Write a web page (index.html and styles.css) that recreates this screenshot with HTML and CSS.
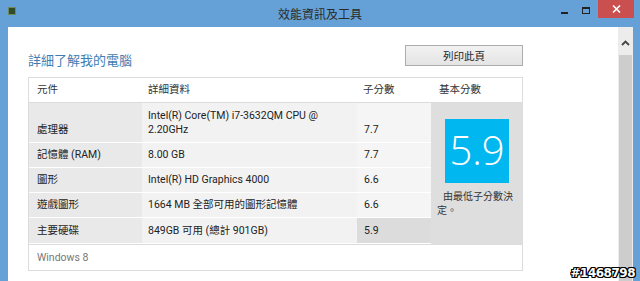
FILE: index.html
```html
<!DOCTYPE html>
<html lang="zh-Hant">
<head>
    <meta charset="UTF-8">
    <title>效能資訊及工具</title>
    <link rel="stylesheet" href="styles.css">
</head>
<body>

    <div class="window">
        <div class="titlebar">
            <span class="app-icon"></span>
            <span class="title">效能資訊及工具</span>
            <div class="controls">
                <span class="btn-min"><span></span></span>
                <span class="btn-max"><span></span></span>
                <span class="btn-close">
                    <svg width="9" height="8" viewBox="0 0 9 8"><path d="M1 0.5 L8 7.5 M8 0.5 L1 7.5" stroke="#fff" stroke-width="1.6"/></svg>
                </span>
            </div>
        </div>

        <div class="frame">
            <div class="content">
                <div class="page-head">
                    <h1>詳細了解我的電腦</h1>
                    <button>列印此頁</button>
                </div>

                <div class="score-table">
                    <div class="grid">
                        <div class="th">元件</div>
                        <div class="th">詳細資料</div>
                        <div class="th">子分數</div>
                        <div class="th">基本分數</div>

                        <div class="td name">處理器</div>
                        <div class="td info">Intel(R) Core(TM) i7-3632QM CPU @<br>2.20GHz</div>
                        <div class="td sub">7.7</div>

                        <div class="base">
                            <div class="base-box">5.9</div>
                            <p>由最低子分數決<br>定。</p>
                        </div>

                        <div class="td name">記憶體 (RAM)</div>
                        <div class="td info">8.00 GB</div>
                        <div class="td sub">7.7</div>

                        <div class="td name">圖形</div>
                        <div class="td info">Intel(R) HD Graphics 4000</div>
                        <div class="td sub">6.6</div>

                        <div class="td name">遊戲圖形</div>
                        <div class="td info">1664 MB 全部可用的圖形記憶體</div>
                        <div class="td sub">6.6</div>

                        <div class="td name">主要硬碟</div>
                        <div class="td info">849GB 可用 (總計 901GB)</div>
                        <div class="td sub lowest">5.9</div>
                    </div>
                    <div class="footer">Windows 8</div>
                </div>
            </div>

            <div class="scrollbar">
                <div class="scroll-up">
                    <svg width="9" height="6" viewBox="0 0 9 6"><polyline points="1,5 4.5,1.5 8,5" fill="none" stroke="#444" stroke-width="1.8"/></svg>
                </div>
                <div class="thumb"></div>
            </div>
        </div>
    </div>

    <div class="watermark">#1468798</div>

</body>
</html>
```

FILE: styles.css
```css
body {
    margin: 0;
    padding: 0;
    font-family: Roboto, "Noto Sans CJK TC", sans-serif;
    font-size: 10.5px;
    color: #333;
    overflow: hidden;
}
.window {
    width: 640px;
    height: 281px;
    background-color: #65a1d7;
    display: flex;
    flex-direction: column;
}
.titlebar {
    height: 27px;
    display: grid;
    grid-template-columns: 1fr auto 1fr;
    align-items: start;
}
.app-icon {
    width: 8px;
    height: 8px;
    margin: 7px 0 0 8px;
    background-color: #2f4a2c;
    border: 1px solid #6d8a5a;
    box-sizing: border-box;
}
.title {
    margin-top: 5px;
    font-size: 12px;
    color: #2a2a2a;
}
.controls {
    display: flex;
    justify-content: flex-end;
    align-items: flex-start;
    padding-right: 6px;
}
.btn-min,
.btn-max {
    width: 14px;
    height: 18px;
    display: flex;
    align-items: center;
    justify-content: center;
}
.btn-min {
    margin-right: 8px;
}
.btn-min span {
    width: 7px;
    height: 2px;
    margin-top: 8px;
    background-color: #222;
}
.btn-max {
    margin-right: 5px;
}
.btn-max span {
    width: 8px;
    height: 7px;
    border: 1px solid #222;
    border-top-width: 2px;
    box-sizing: border-box;
    margin-top: 3px;
}
.btn-close {
    width: 36px;
    height: 18px;
    background-color: #c9504e;
    display: flex;
    align-items: center;
    justify-content: center;
}
.frame {
    flex: 1;
    display: flex;
    padding-left: 8px;
    padding-right: 7px;
    overflow: hidden;
}
.content {
    flex: 1;
    background-color: #fff;
    padding: 18px 0 0 20px;
}
.page-head {
    width: 495px;
    display: flex;
    justify-content: space-between;
    align-items: flex-end;
}
h1 {
    margin: 0;
    font-family: "Noto Sans CJK TC", sans-serif;
    font-size: 13px;
    font-weight: normal;
    color: #3f7db3;
    line-height: 17px;
    position: relative;
    top: 2px;
}
button {
    width: 118px;
    height: 21px;
    font-family: inherit;
    font-size: 10.5px;
    color: #222;
    background: linear-gradient(#f2f2f2, #e4e4e4);
    border: 1px solid #adadad;
    padding: 0;
}
.score-table {
    width: 495px;
    margin-top: 11px;
    border: 1px solid #dcdcdc;
    box-sizing: border-box;
}
.grid {
    display: grid;
    grid-template-columns: 113px 215px 74px 91px;
    grid-template-rows: 25px 40px 25px 25px 25px 26px;
}
.th {
    background-color: #fff;
    border-bottom: 1px solid #dcdcdc;
    padding: 5px 0 0 8px;
    line-height: 14px;
}
.th:nth-child(2),
.th:nth-child(3) {
    padding-left: 6px;
}
.td {
    display: flex;
    align-items: flex-end;
    border-bottom: 1px solid #fff;
    padding: 0 0 5px 8px;
    line-height: 14px;
    color: #222;
}
.name {
    background-color: #e9e9e9;
}
.info {
    background-color: #f2f2f2;
    padding-left: 6px;
}
.sub {
    background-color: #f5f5f5;
    padding-left: 7px;
}
.sub.lowest {
    background-color: #dcdcdc;
}
.base {
    grid-column: 4;
    grid-row: 2 / span 5;
    background-color: #dedede;
    padding-top: 16px;
}
.base-box {
    width: 64px;
    height: 64px;
    margin-left: 14px;
    background-color: #00b7ef;
    color: #fff;
    font-family: "Open Sans", "Noto Sans", sans-serif;
    font-weight: 300;
    font-size: 40px;
    line-height: 62px;
    text-align: center;
}
.base p {
    margin: 7px 0 0 6px;
    text-indent: 6px;
    font-size: 10px;
    line-height: 14px;
    color: #333;
}
.footer {
    height: 25px;
    border-top: 1px solid #dcdcdc;
    background-color: #fff;
    padding-left: 8px;
    line-height: 25px;
    color: #777;
}
.scrollbar {
    width: 15px;
    background-color: #ececec;
    display: flex;
    flex-direction: column;
    align-items: center;
}
.scroll-up {
    height: 28px;
    display: flex;
    align-items: center;
    justify-content: center;
    padding-top: 4px;
    box-sizing: border-box;
}
.thumb {
    flex: 1;
    width: 13px;
    background-color: #cdcdcd;
}
.watermark {
    position: absolute;
    right: 5px;
    bottom: 1px;
    font-family: "DejaVu Sans", sans-serif;
    font-weight: bold;
    font-size: 12px;
    color: #fff;
    letter-spacing: -0.5px;
    text-shadow: -1px -1px 0 #000, 1px -1px 0 #000, -1px 1px 0 #000, 1px 1px 0 #000, 0 1px 0 #000, 0 -1px 0 #000, 1px 0 0 #000, -1px 0 0 #000;
}
```
